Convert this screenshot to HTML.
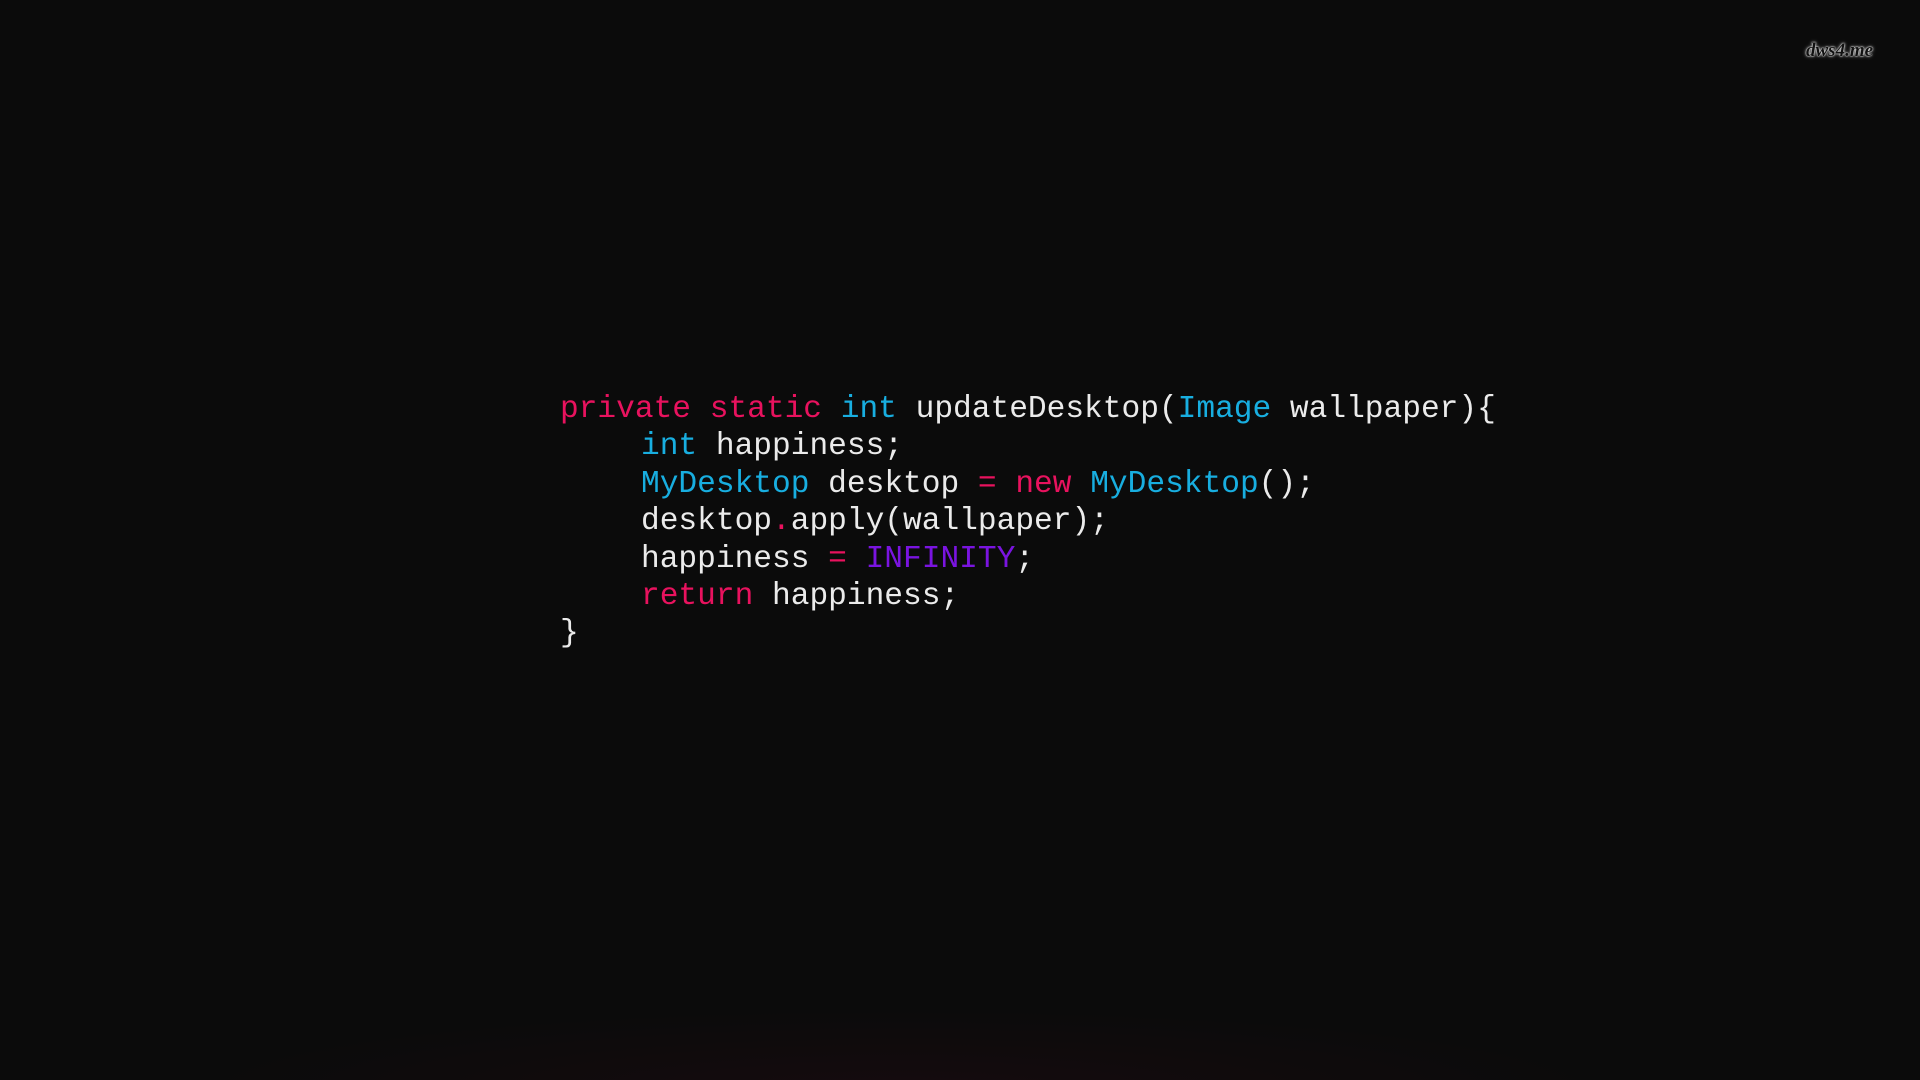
<!DOCTYPE html>
<html><head><meta charset="utf-8"><style>
html,body{margin:0;padding:0;width:1920px;height:1080px;overflow:hidden;background:#0b0b0b;}
body{background:radial-gradient(ellipse 700px 80px at 900px 1090px,#150b0e 0%,#0b0b0b 100%);}
pre{position:absolute;left:560px;top:391px;margin:0;font-family:"Liberation Mono",monospace;font-size:31.2px;line-height:37.4px;color:#ebebeb;}
.i{padding-left:81px;display:inline-block}
.k{color:#e8125e}.t{color:#18aee0}.p{color:#7a14e0}
.wm{position:absolute;left:1806px;top:40px;font-family:"Liberation Serif",serif;font-style:italic;font-weight:bold;font-size:19px;color:#111;text-shadow:0 0 1px #fff,0 0 2px #fff,0 0 4px rgba(255,255,255,.6);}
</style></head><body>
<pre><span class="k">private static</span> <span class="t">int</span> updateDesktop(<span class="t">Image</span> wallpaper){
<span class="i"><span class="t">int</span> happiness;</span>
<span class="i"><span class="t">MyDesktop</span> desktop <span class="k">=</span> <span class="k">new</span> <span class="t">MyDesktop</span>();</span>
<span class="i">desktop<span class="k">.</span>apply(wallpaper);</span>
<span class="i">happiness <span class="k">=</span> <span class="p">INFINITY</span>;</span>
<span class="i"><span class="k">return</span> happiness;</span>
}</pre>
<div class="wm">dws4.me</div>
</body></html>
